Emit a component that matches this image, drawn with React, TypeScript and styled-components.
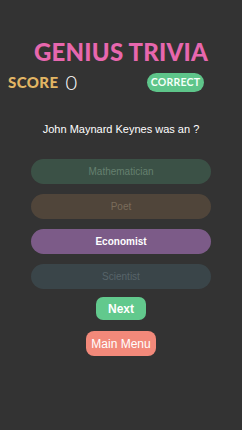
import styled, { createGlobalStyle } from 'styled-components';

const Global = createGlobalStyle`
  html, body {
    margin: 0;
    padding: 0;
    background: #333333;
  }
`

const Screen = styled.div`
  width: 242px;
  height: 430px;
  background: #333333;
  display: flex;
  flex-direction: column;
  align-items: center;
  font-family: 'Liberation Sans', Arial, sans-serif;
`

const Title = styled.h1`
  margin: 37px 0 0;
  font-family: Lato, 'DejaVu Sans', sans-serif;
  font-weight: 900;
  font-size: 24px;
  line-height: 30px;
  letter-spacing: 0.2px;
  color: #e767ae;
`

const ScoreRow = styled.div`
  align-self: stretch;
  display: flex;
  align-items: center;
  justify-content: space-between;
  height: 20px;
  margin-top: 5px;
  padding: 0 38px 0 8px;
`

const Score = styled.div`
  display: flex;
  align-items: center;
  gap: 7px;
`

const ScoreLabel = styled.span`
  font-family: Lato, 'DejaVu Sans', sans-serif;
  font-weight: 900;
  font-size: 15px;
  letter-spacing: 0.4px;
  color: #e2b664;
`

const ScoreValue = styled.span`
  font-family: Lato, 'DejaVu Sans', sans-serif;
  font-weight: 300;
  font-size: 20px;
  color: #ffffff;
`

const Badge = styled.div`
  width: 57px;
  height: 19px;
  border-radius: 10px;
  background: #5ec58a;
  color: #f4fff8;
  display: flex;
  align-items: center;
  justify-content: center;
  font-family: Lato, 'DejaVu Sans', sans-serif;
  font-weight: 700;
  font-size: 10.5px;
  letter-spacing: 0.2px;
`

const Question = styled.p`
  margin: 29px 0 0;
  font-size: 11px;
  line-height: 16px;
  color: #ffffff;
`

const Options = styled.div`
  margin-top: 22px;
  display: flex;
  flex-direction: column;
  gap: 10px;
`

const Option = styled.button<{ $bg: string; $fg: string; $bold?: boolean }>`
  width: 180px;
  height: 25px;
  border: none;
  border-radius: 13px;
  padding: 0;
  background: ${p => p.$bg};
  color: ${p => p.$fg};
  font-family: 'Liberation Sans', Arial, sans-serif;
  font-size: 10px;
  font-weight: ${p => (p.$bold ? 700 : 400)};
`

const NextButton = styled.button`
  margin-top: 8px;
  width: 50px;
  height: 23px;
  border: none;
  border-radius: 7px;
  padding: 0;
  background: #62c98d;
  color: #ffffff;
  font-family: 'Liberation Sans', Arial, sans-serif;
  font-size: 12px;
  font-weight: 700;
`

const MenuButton = styled.button`
  margin-top: 11px;
  width: 70px;
  height: 25px;
  border: none;
  border-radius: 8px;
  padding: 0;
  background: #f2897a;
  color: #ffffff;
  font-family: 'Liberation Sans', Arial, sans-serif;
  font-size: 12px;
`

const answers = [
  { label: 'Mathematician', bg: '#3b5146', fg: '#65806f' },
  { label: 'Poet', bg: '#50453a', fg: '#7a6c5a' },
  { label: 'Economist', bg: '#7c5b88', fg: '#ffffff', bold: true },
  { label: 'Scientist', bg: '#3a4549', fg: '#58646a' },
]

export default function App() {
  return (
    <Screen>
      <Global />
      <Title>GENIUS TRIVIA</Title>
      <ScoreRow>
        <Score>
          <ScoreLabel>SCORE</ScoreLabel>
          <ScoreValue>0</ScoreValue>
        </Score>
        <Badge>CORRECT</Badge>
      </ScoreRow>
      <Question>John Maynard Keynes was an ?</Question>
      <Options>
        {answers.map(a => (
          <Option key={a.label} $bg={a.bg} $fg={a.fg} $bold={a.bold}>
            {a.label}
          </Option>
        ))}
      </Options>
      <NextButton>Next</NextButton>
      <MenuButton>Main Menu</MenuButton>
    </Screen>
  )
}
